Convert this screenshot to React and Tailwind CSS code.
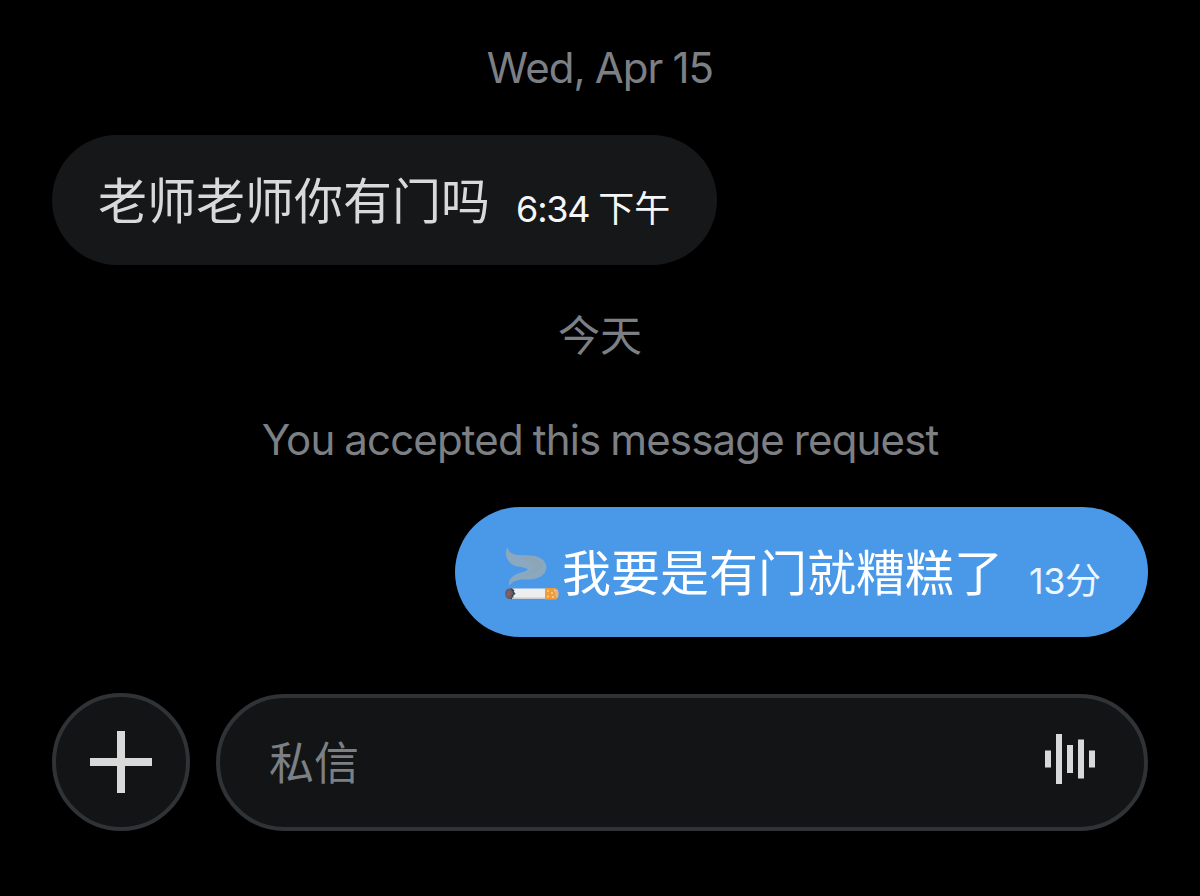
const FONT = "font-['Inter','Noto_Sans_CJK_SC',sans-serif]";

function Notice({ className = '', children }) {
  return (
    <div className={`flex items-center justify-center h-16 text-[42px] leading-none text-[#7c8085] whitespace-nowrap ${className}`}>
      {children}
    </div>
  );
}

function CigaretteEmoji() {
  return (
    <svg viewBox="0 0 56 54" className="mt-[4px] w-[56px] h-[54px] shrink-0">
      <path
        d="M3.5 0 C4.500 5 8 7.500 14 8 C22 8.500 30 7.500 37 11.500 C42.500 15 44 21 40.500 26 C37 31.500 29 32.500 22 32.500 C13 32.500 8 34 5.300 39 C3.800 34 7 29.500 13 27 C18 25 23 24.500 23.500 22.500 C22 19.500 13 20.500 8 17.500 C1.500 13 0.500 5 3.500 0 Z"
        fill="#a3adb0"
        opacity=".72"
      />
      <path
        d="M24 9 C34 10 40 14 38 20 C36 26 27 28 18 29 C26 27 31 24 31 20 C31 15 25 13 16 12 Z"
        fill="#90a4ae"
        opacity=".45"
      />
      <path d="M4.500 41.500 H11 V52 H4.500 C0 51 0 42.500 4.500 41.500 Z" fill="#665c68" />
      <path d="M3 44.500 L6 44 L7 47 L5 50 L2.500 49 Z" fill="#8d5c5b" />
      <path d="M8 41.500 H42 V52 H8 L9.500 50 L8.500 48.500 L11 47 L9 45 L10 43.500 Z" fill="#eeeeee" />
      <path d="M7 42 L9.500 43.500 L9 45 L10.500 46.500 L8.500 48.500 L8.500 50.500 L7 52" fill="none" stroke="#37474f" strokeWidth="1.500" />
      <path d="M8 50.500 H42 V52 H8 Z" fill="#c5cbd0" />
      <path d="M41 41 H51.500 C55.500 42 55.500 51.500 51.500 52.500 H41 Z" fill="#ef9c3c" />
      <g fill="#ffd58c">
        <circle cx="44" cy="44" r="1" />
        <circle cx="48" cy="46" r="1" />
        <circle cx="44" cy="49.500" r="1" />
        <circle cx="51" cy="43.500" r="1" />
        <circle cx="49" cy="50" r="1" />
      </g>
      <ellipse cx="52.800" cy="46.700" rx="1.500" ry="4" fill="#dcb58c" />
    </svg>
  );
}

function PlusIcon() {
  return (
    <svg viewBox="0 0 62 62" className="w-[62px] h-[62px]" fill="#d9d9d9">
      <path d="M27 0h8v27h27v8H35v27h-8V35H0v-8h27z" />
    </svg>
  );
}

function VoiceIcon() {
  return (
    <svg viewBox="0 0 50 50" className="mb-[6px] w-[50px] h-[50px]" fill="#d9d9d9">
      <rect x="0" y="16.500" width="6" height="17" />
      <rect x="11" y="0" width="6" height="50" />
      <rect x="22" y="11" width="6" height="28" />
      <rect x="33" y="5.500" width="6" height="39" />
      <rect x="44" y="16.500" width="6" height="17" />
    </svg>
  );
}

export default function App() {
  return (
    <div className={`w-[1200px] h-[896px] bg-black overflow-hidden flex flex-col px-[52px] pt-9 ${FONT}`}>
      <Notice><span className="tracking-[-0.9px] [word-spacing:-1px]">Wed, Apr 15</span></Notice>

      <div className="mt-[35px] self-start flex items-center w-[665px] h-[130px] rounded-full bg-[#161719] pl-[46px] whitespace-nowrap">
        <span className="mt-[2px] text-[49px] leading-none text-[#d9d9d9]">老师老师你有门吗</span>
        <span className="ml-[26px] mt-[18px] text-[36px] leading-none text-[#f5f6f8]">
          <span className="tracking-[-1.200px]">6:34 </span>下午
        </span>
      </div>

      <Notice className="mt-[39px]">今天</Notice>
      <Notice className="mt-10"><span className="tracking-[-0.85px] [word-spacing:-1px]">You accepted this message request</span></Notice>

      <div className="mt-[35px] self-end flex items-center w-[693px] h-[130px] rounded-full bg-[#4a99e9] pl-[49px] whitespace-nowrap text-white">
        <CigaretteEmoji />
        <span className="ml-[2px] mt-[2px] text-[49px] leading-none">我要是有门就糟糕了</span>
        <span className="ml-[26px] mt-[18px] text-[36px] leading-none text-[#eef7ff]">
          <span className="tracking-[-0.5px]">13</span>分
        </span>
      </div>

      <div className="mt-14 flex items-center gap-[26px]">
        <button className="flex items-center justify-center size-[138px] shrink-0 rounded-full border-4 border-[#2f3336] bg-[#121416]">
          <PlusIcon />
        </button>
        <div className="flex items-center justify-between flex-1 h-[137px] rounded-full border-4 border-[#2f3336] bg-[#121416] pl-[49px] pr-[49px]">
          <span className="mt-[3px] text-[45px] leading-none text-[#7c8085]">私信</span>
          <VoiceIcon />
        </div>
      </div>
    </div>
  );
}
